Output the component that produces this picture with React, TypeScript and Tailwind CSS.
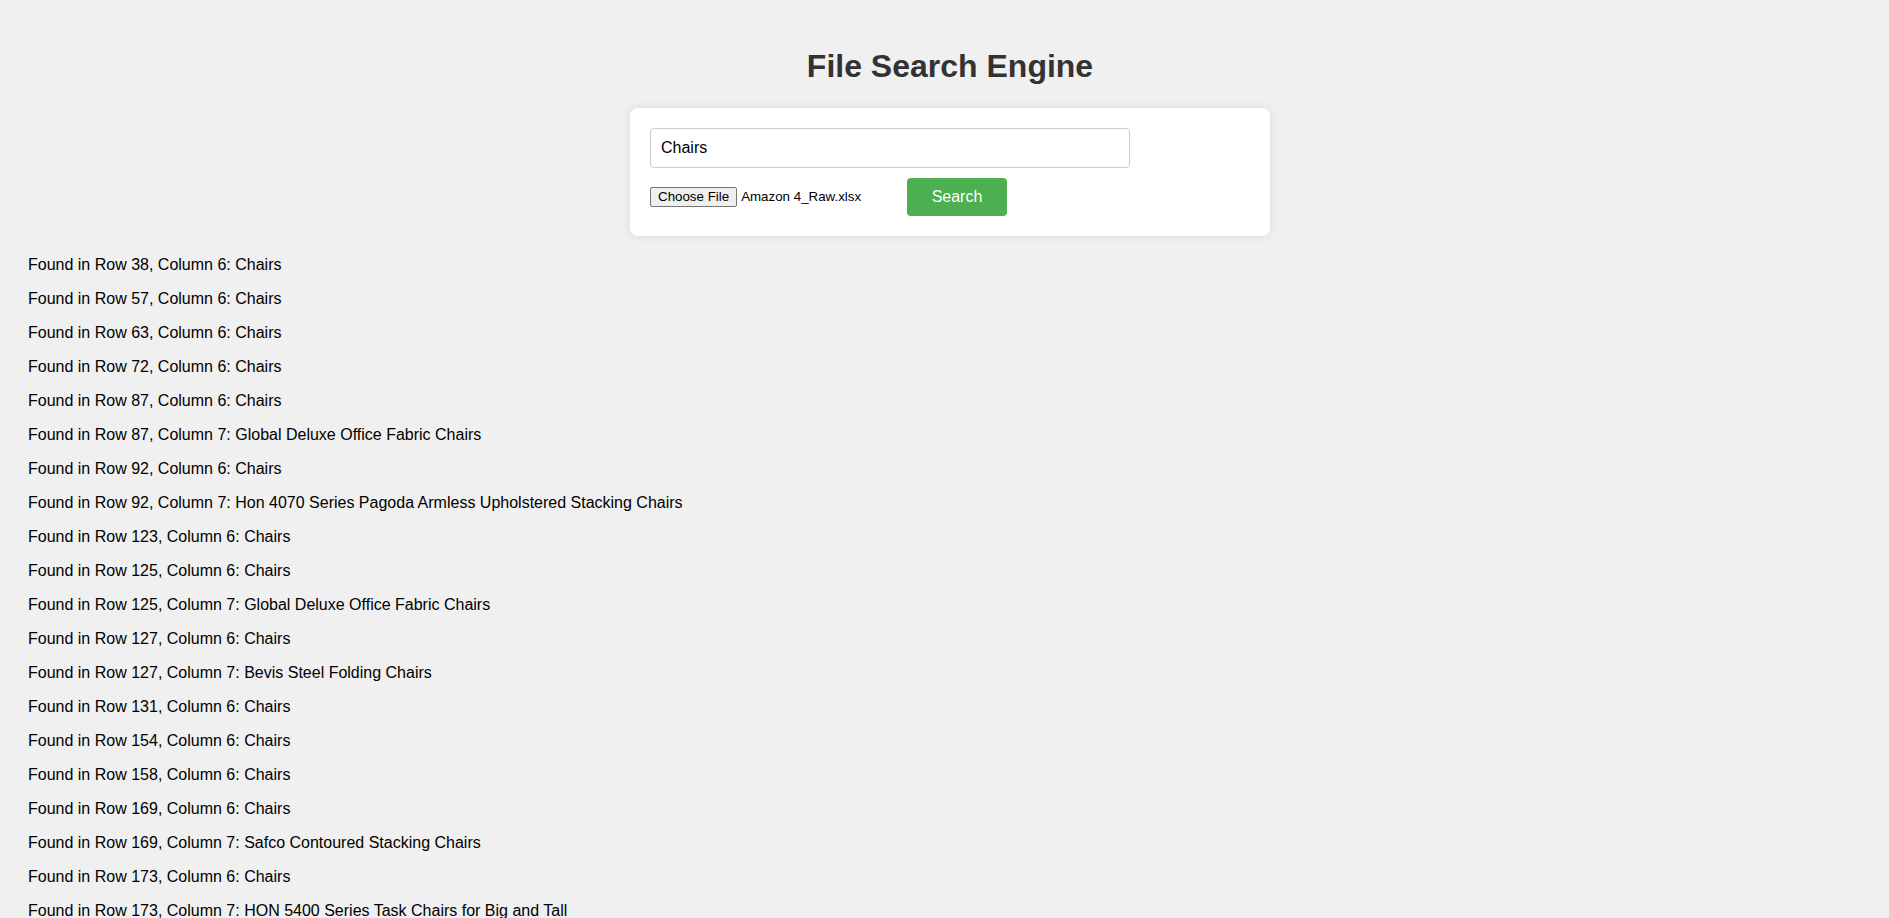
// File search page: title, search card, list of matches

const results: [number, number, string][] = [
  [38, 6, "Chairs"],
  [57, 6, "Chairs"],
  [63, 6, "Chairs"],
  [72, 6, "Chairs"],
  [87, 6, "Chairs"],
  [87, 7, "Global Deluxe Office Fabric Chairs"],
  [92, 6, "Chairs"],
  [92, 7, "Hon 4070 Series Pagoda Armless Upholstered Stacking Chairs"],
  [123, 6, "Chairs"],
  [125, 6, "Chairs"],
  [125, 7, "Global Deluxe Office Fabric Chairs"],
  [127, 6, "Chairs"],
  [127, 7, "Bevis Steel Folding Chairs"],
  [131, 6, "Chairs"],
  [154, 6, "Chairs"],
  [158, 6, "Chairs"],
  [169, 6, "Chairs"],
  [169, 7, "Safco Contoured Stacking Chairs"],
  [173, 6, "Chairs"],
  [173, 7, "HON 5400 Series Task Chairs for Big and Tall"],
]

export default function App() {
  return (
    <div className="min-h-screen bg-[#f0f0f0] font-['Liberation_Sans',Arial,sans-serif] text-black">
      <div className="pl-[11px] pt-[48px]">
        <h1 className="text-center text-[32px] font-bold leading-[37px] text-[#333]">File Search Engine</h1>

        <div className="mx-auto mt-[23px] w-[640px] rounded-lg bg-white p-5 shadow-[0_0_10px_rgba(0,0,0,0.1)]">
          <input
            type="text"
            defaultValue="Chairs"
            className="block h-10 w-[480px] rounded border border-[#ccc] px-[10px] text-[16px] text-black outline-none"
          />
          <div className="mt-[10px] flex items-center">
            <div className="flex w-[247px] items-center text-[13.33px] leading-4">
              <span className="flex h-[20px] items-center rounded-[2px] border border-[#767676] bg-[#efefef] px-[7px] text-black">
                Choose File
              </span>
              <span className="ml-[4px]">Amazon 4_Raw.xlsx</span>
            </div>
            <button className="ml-[10px] h-[38px] w-[100px] rounded bg-[#4caf50] text-[16px] text-white">Search</button>
          </div>
        </div>
      </div>

      <div className="px-[28px] pt-5">
        {results.map(([row, col, val], i) => (
          <p key={i} className="mb-4 text-[16px] leading-[18px]">
            Found in Row {row}, Column {col}: {val}
          </p>
        ))}
      </div>
    </div>
  )
}
